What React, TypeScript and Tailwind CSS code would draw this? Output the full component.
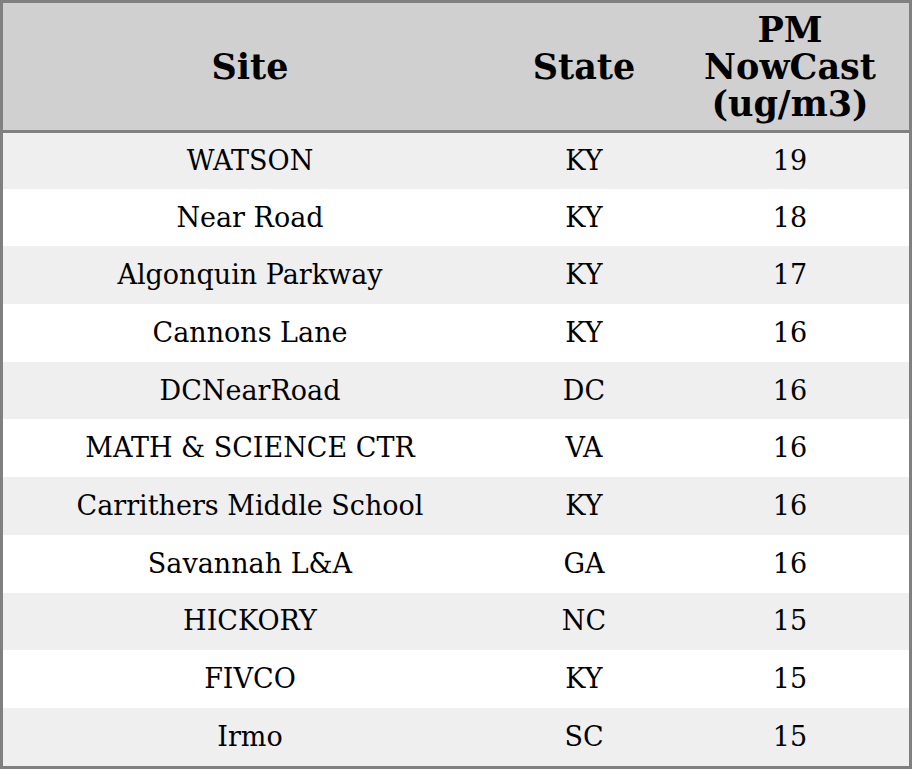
const rows: [string, string, number][] = [
  ['WATSON', 'KY', 19],
  ['Near Road', 'KY', 18],
  ['Algonquin Parkway', 'KY', 17],
  ['Cannons Lane', 'KY', 16],
  ['DCNearRoad', 'DC', 16],
  ['MATH & SCIENCE CTR', 'VA', 16],
  ['Carrithers Middle School', 'KY', 16],
  ['Savannah L&A', 'GA', 16],
  ['HICKORY', 'NC', 15],
  ['FIVCO', 'KY', 15],
  ['Irmo', 'SC', 15],
]

export default function App() {
  return (
    <div className="w-[912px] h-[769px] bg-white font-['DejaVu_Serif',serif] text-black">
      <div className="border-[3px] border-[#808080]">
        <table className="w-full table-fixed border-collapse">
          <colgroup>
            <col className="w-[494px]" />
            <col className="w-[174px]" />
            <col />
          </colgroup>
          <thead>
            <tr className="bg-[#d0d0d0] h-[128px] border-b-[3px] border-[#808080]">
              <th className="text-[35px] leading-[37px] font-bold">Site</th>
              <th className="text-[35px] leading-[37px] font-bold">State</th>
              <th className="text-[35px] leading-[37px] font-bold">
                PM
                <br />
                NowCast
                <br />
                (ug/m3)
              </th>
            </tr>
          </thead>
          <tbody>
            {rows.map(([site, state, pm], i) => (
              <tr key={site} className={i % 2 === 0 ? 'bg-[#efefef] h-[57.7px]' : 'bg-white h-[57.7px]'}>
                <td className="text-center text-[27px] leading-[30px] p-0">{site}</td>
                <td className="text-center text-[27px] leading-[30px] p-0">{state}</td>
                <td className="text-center text-[27px] leading-[30px] p-0">{pm}</td>
              </tr>
            ))}
          </tbody>
        </table>
      </div>
    </div>
  )
}
